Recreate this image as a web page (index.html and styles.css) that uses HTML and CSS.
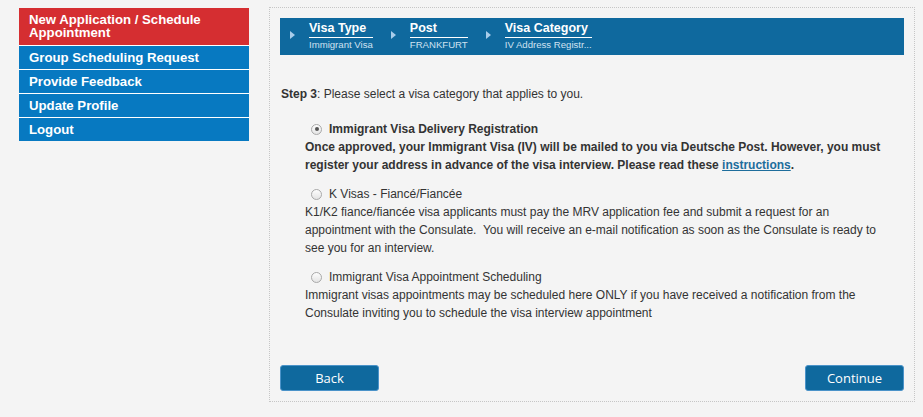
FILE: index.html
```html
<!DOCTYPE html>
<html>
<head>
<meta charset="utf-8">
<link rel="stylesheet" href="styles.css">
</head>
<body>
<div class="page">
  <nav class="sidebar">
    <a class="nav-item active">New Application / Schedule Appointment</a>
    <a class="nav-item">Group Scheduling Request</a>
    <a class="nav-item">Provide Feedback</a>
    <a class="nav-item">Update Profile</a>
    <a class="nav-item">Logout</a>
  </nav>
  <main class="panel">
    <div class="steps">
      <div class="step">
        <span class="tri"></span>
        <div class="step-text">
          <div class="step-title">Visa Type</div>
          <div class="step-sub">Immigrant Visa</div>
        </div>
      </div>
      <div class="step">
        <span class="tri"></span>
        <div class="step-text">
          <div class="step-title">Post</div>
          <div class="step-sub">FRANKFURT</div>
        </div>
      </div>
      <div class="step">
        <span class="tri"></span>
        <div class="step-text">
          <div class="step-title">Visa Category</div>
          <div class="step-sub">IV Address Registr...</div>
        </div>
      </div>
    </div>
    <p class="prompt"><b>Step 3</b>: Please select a visa category that applies to you.</p>
    <div class="options">
      <div class="option">
        <label class="opt-label"><span class="radio checked"></span><b>Immigrant Visa Delivery Registration</b></label>
        <div class="desc bold">Once approved, your Immigrant Visa (IV) will be mailed to you via Deutsche Post. However, you must register your address in advance of the visa interview. Please read these <a class="link">instructions</a>.</div>
      </div>
      <div class="option">
        <label class="opt-label"><span class="radio"></span>K Visas - Fiancé/Fiancée</label>
        <div class="desc">K1/K2 fiance/fiancée visa applicants must pay the MRV application fee and submit a request for an appointment with the Consulate.&nbsp; You will receive an e-mail notification as soon as the Consulate is ready to see you for an interview.</div>
      </div>
      <div class="option">
        <label class="opt-label"><span class="radio"></span>Immigrant Visa Appointment Scheduling</label>
        <div class="desc">Immigrant visas appointments may be scheduled here ONLY if you have received a notification from the Consulate inviting you to schedule the visa interview appointment</div>
      </div>
    </div>
    <div class="actions">
      <button class="btn">Back</button>
      <button class="btn">Continue</button>
    </div>
  </main>
</div>
</body>
</html>
```

FILE: styles.css
```css
html, body {
  margin: 0;
  padding: 0;
  background: #f4f4f4;
}
body {
  font-family: "Liberation Sans", Arial, sans-serif;
  color: #333;
  font-size: 12px;
}
.page {
  display: flex;
  align-items: flex-start;
  padding: 7px 0 0 19px;
  gap: 20px;
}
.sidebar {
  width: 230px;
  display: flex;
  flex-direction: column;
  margin-top: 1px;
}
.nav-item {
  display: block;
  background: #0779c1;
  color: #fff;
  font-weight: bold;
  font-size: 13.2px;
  line-height: 13px;
  padding: 5px 10px 5px 10px;
  border-bottom: 1px solid #fff;
}
.nav-item.active {
  background: #d52e31;
  padding: 5px 10px 6px 10px;
}
.nav-item:last-child {
  border-bottom: none;
}
.panel {
  width: 624px;
  border: 1px dotted #c6c6c6;
  padding: 10px;
  display: flex;
  flex-direction: column;
}
.steps {
  background: #0f699e;
  height: 37px;
  display: flex;
  align-items: flex-start;
  padding-left: 10px;
  gap: 18px;
}
.step {
  display: flex;
  align-items: flex-start;
}
.tri {
  width: 0;
  height: 0;
  border-top: 4px solid transparent;
  border-bottom: 4px solid transparent;
  border-left: 5px solid #a8cdea;
  margin-top: 13px;
  margin-right: 14px;
}
.step-text {
  padding-top: 3px;
}
.step-title {
  color: #fff;
  font-weight: bold;
  font-size: 12.5px;
  line-height: 15px;
  border-bottom: 1px solid #fff;
  padding-bottom: 1px;
}
.step-sub {
  color: #cfe2f1;
  font-size: 9.6px;
  line-height: 13px;
}
.prompt {
  margin: 30px 0 0 1px;
  line-height: 18px;
}
.options {
  margin-top: 17px;
  padding-left: 25px;
  padding-right: 20px;
}
.option {
  margin-bottom: 11px;
}
.opt-label {
  display: flex;
  align-items: center;
  line-height: 18px;
}
.radio {
  width: 11px;
  height: 11px;
  border-radius: 50%;
  border: 1px solid #a9a9a9;
  background: linear-gradient(#fdfdfd, #e4e4e4);
  margin: 0 7px 0 6px;
  box-sizing: border-box;
  position: relative;
  flex: none;
}
.radio.checked::after {
  content: "";
  position: absolute;
  left: 2.5px;
  top: 2.5px;
  width: 4px;
  height: 4px;
  border-radius: 50%;
  background: #555;
}
.desc {
  line-height: 18px;
}
.desc.bold {
  font-weight: bold;
}
.link {
  color: #1d6d9c;
  text-decoration: underline;
}
.actions {
  display: flex;
  justify-content: space-between;
  margin-top: 32px;
}
.btn {
  width: 99px;
  height: 26px;
  background: #0f699e;
  border: 1px solid #4b93c9;
  border-radius: 3px;
  color: #fff;
  font-family: "Open Sans", "Noto Sans", sans-serif;
  font-size: 13px;
  padding: 0;
}
```
